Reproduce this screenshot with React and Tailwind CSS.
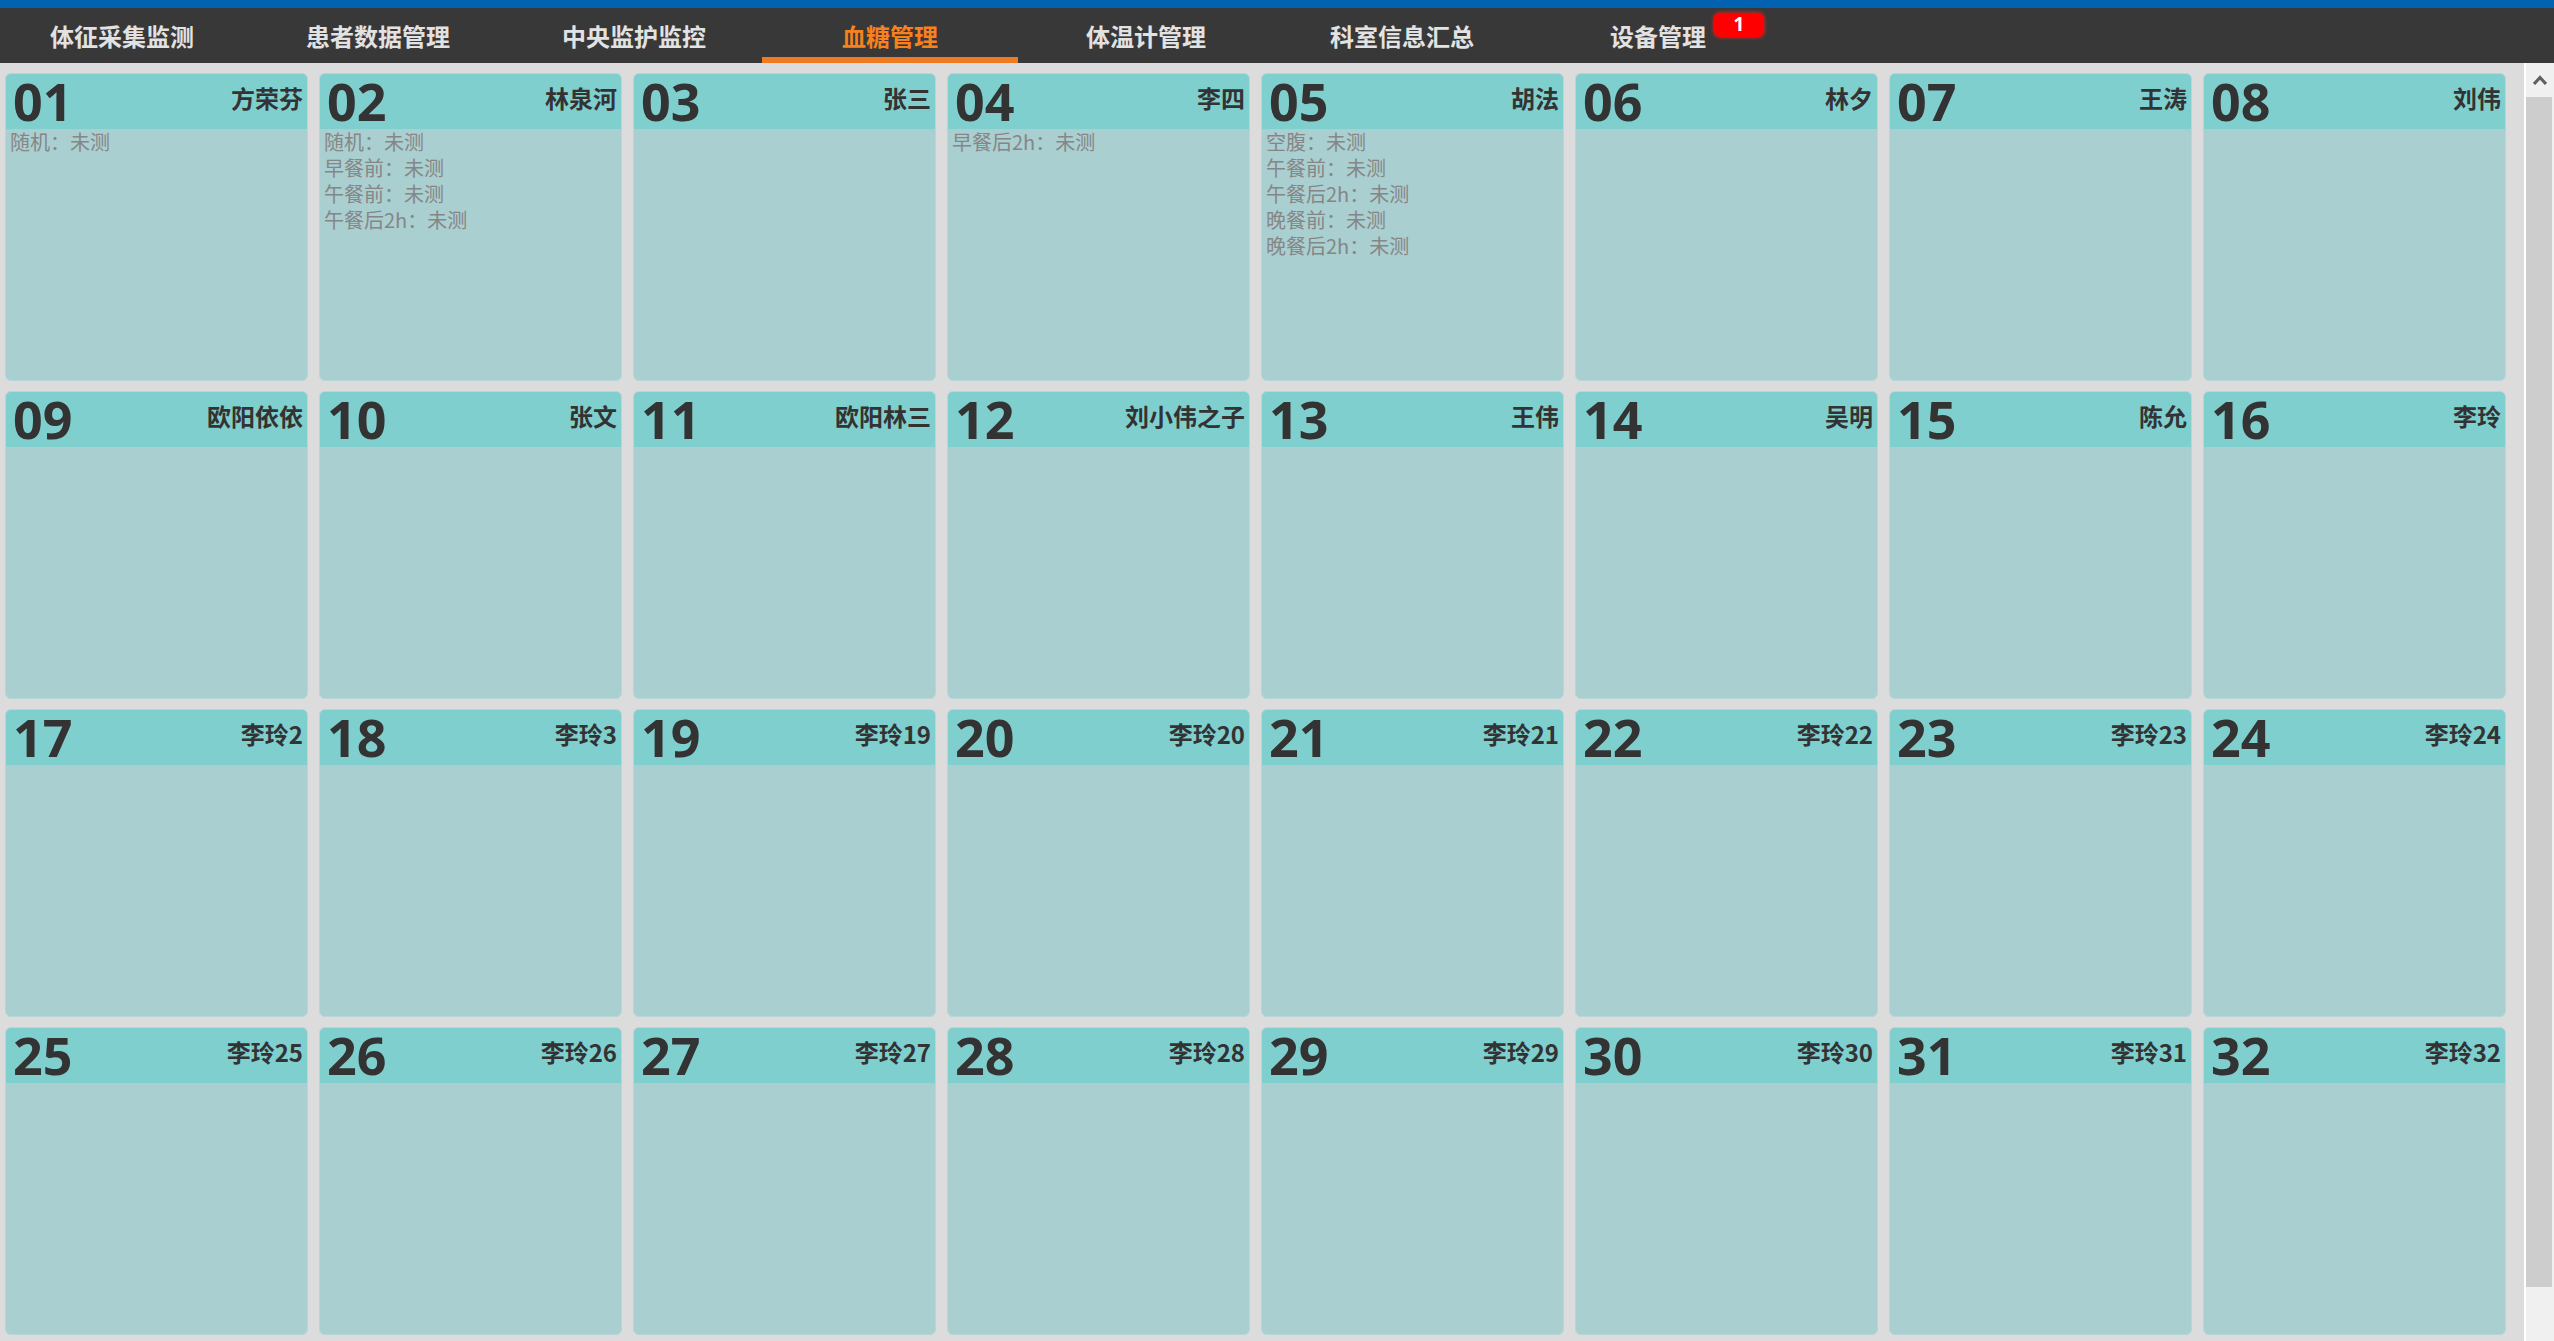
const TABS = [
  "体征采集监测",
  "患者数据管理",
  "中央监护监控",
  "血糖管理",
  "体温计管理",
  "科室信息汇总",
  "设备管理",
];

const ACTIVE_TAB = 3;

const NAMES = [
  "方荣芬", "林泉河", "张三", "李四", "胡法", "林夕", "王涛", "刘伟",
  "欧阳依依", "张文", "欧阳林三", "刘小伟之子", "王伟", "吴明", "陈允", "李玲",
  "李玲2", "李玲3", "李玲19", "李玲20", "李玲21", "李玲22", "李玲23", "李玲24",
  "李玲25", "李玲26", "李玲27", "李玲28", "李玲29", "李玲30", "李玲31", "李玲32",
];

// readings still pending, keyed by bed number
const PENDING = {
  1: ["随机"],
  2: ["随机", "早餐前", "午餐前", "午餐后2h"],
  4: ["早餐后2h"],
  5: ["空腹", "午餐前", "午餐后2h", "晚餐前", "晚餐后2h"],
};

const cjk = { fontFamily: '"Noto Sans CJK SC", "Noto Sans", sans-serif' };

const NavBar = () => (
  <nav className="flex h-[55px] shrink-0 bg-[#383838]" style={cjk}>
    <div className="-ml-[6px] flex">
      {TABS.map((tab, i) => (
        <div
          key={tab}
          className={
            i === ACTIVE_TAB
              ? "flex h-full w-[256px] items-center justify-center text-[24px] font-bold text-[#f5821f] shadow-[inset_0_-6px_0_#f07a22]"
              : "flex h-full w-[256px] items-center justify-center text-[24px] font-bold text-[#e2e2e2]"
          }
        >
          <span className="relative leading-[24px]">
            {tab}
            {i === TABS.length - 1 && (
              <span
                className="absolute -top-[11px] left-[calc(100%+8px)] flex h-[24px] w-[50px] items-center justify-center rounded-[6px] bg-[#ff0000] text-[19px] font-bold leading-none text-white shadow-[0_0_4px_#ff2020]"
                style={{ fontFamily: '"Open Sans", sans-serif' }}
              >
                1
              </span>
            )}
          </span>
        </div>
      ))}
    </div>
  </nav>
);

const BedCard = ({ no, name }) => {
  const label = String(no).padStart(2, "0");
  const rows = PENDING[no] || [];

  return (
    <div className="flex h-[308px] flex-col overflow-hidden rounded-[6px] border border-[#b6d6d7] bg-[#aacfd0]">
      <div className="flex h-[55px] shrink-0 items-start justify-between bg-[#80cfcf] pl-[7px] pr-[4px]">
        <span
          className="text-[52px] font-bold leading-[53px] text-[#333333]"
          style={{ fontFamily: '"Open Sans", sans-serif' }}
        >
          {label}
        </span>
        <span
          className="mt-[12px] text-[24px] font-bold leading-[24px] text-[#333333]"
          style={cjk}
        >
          {name}
        </span>
      </div>
      <div className="flex flex-col pl-[4px]" style={cjk}>
        {rows.map((r) => (
          <span key={r} className="text-[20px] leading-[26px] text-[#868686]">
            {r}：未测
          </span>
        ))}
      </div>
    </div>
  );
};

const ScrollBar = () => (
  <div className="flex w-[28px] shrink-0 flex-col bg-[#f0f0f0]">
    <div className="flex h-[34px] items-center justify-center">
      <svg width="16" height="12" viewBox="0 0 16 12">
        <path d="M2 10 L8 3.5 L14 10" fill="none" stroke="#606060" strokeWidth="3.2" />
      </svg>
    </div>
    <div className="mr-[2px] h-[1190px] bg-[#cdcdcd]" />
  </div>
);

export default function App() {
  return (
    <div className="flex h-[1341px] w-full flex-col overflow-hidden bg-[#dcdcdc]">
      <div className="h-[8px] shrink-0 bg-[#0062b0]" />
      <NavBar />
      <div className="flex min-h-0 flex-1">
        <main className="min-w-0 flex-1 overflow-hidden pl-[5px] pt-[10px]">
          <div className="grid grid-cols-[repeat(8,303px)] gap-x-[11px] gap-y-[10px]">
            {NAMES.map((name, i) => (
              <BedCard key={i} no={i + 1} name={name} />
            ))}
          </div>
        </main>
        <div className="w-[2px] shrink-0 bg-white" />
        <ScrollBar />
      </div>
    </div>
  );
}
